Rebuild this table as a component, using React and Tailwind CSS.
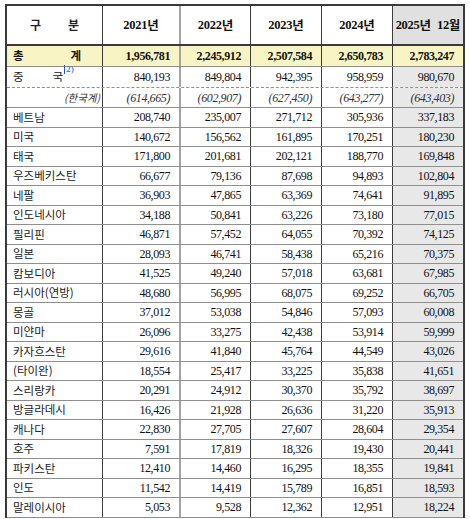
import React from 'react';

// 국적별 체류외국인 현황 (연도별)
const rows = [
  ['베트남', '208,740', '235,007', '271,712', '305,936', '337,183'],
  ['미국', '140,672', '156,562', '161,895', '170,251', '180,230'],
  ['태국', '171,800', '201,681', '202,121', '188,770', '169,848'],
  ['우즈베키스탄', '66,677', '79,136', '87,698', '94,893', '102,804'],
  ['네팔', '36,903', '47,865', '63,369', '74,641', '91,895'],
  ['인도네시아', '34,188', '50,841', '63,226', '73,180', '77,015'],
  ['필리핀', '46,871', '57,452', '64,055', '70,392', '74,125'],
  ['일본', '28,093', '46,741', '58,438', '65,216', '70,375'],
  ['캄보디아', '41,525', '49,240', '57,018', '63,681', '67,985'],
  ['러시아(연방)', '48,680', '56,995', '68,075', '69,252', '66,705'],
  ['몽골', '37,012', '53,038', '54,846', '57,093', '60,008'],
  ['미얀마', '26,096', '33,275', '42,438', '53,914', '59,999'],
  ['카자흐스탄', '29,616', '41,840', '45,764', '44,549', '43,026'],
  ['(타이완)', '18,554', '25,417', '33,225', '35,838', '41,651'],
  ['스리랑카', '20,291', '24,912', '30,370', '35,792', '38,697'],
  ['방글라데시', '16,426', '21,928', '26,636', '31,220', '35,913'],
  ['캐나다', '22,830', '27,705', '27,607', '28,604', '29,354'],
  ['호주', '7,591', '17,819', '18,326', '19,430', '20,441'],
  ['파키스탄', '12,410', '14,460', '16,295', '18,355', '19,841'],
  ['인도', '11,542', '14,419', '15,789', '16,851', '18,593'],
  ['말레이시아', '5,053', '9,528', '12,362', '12,951', '18,224'],
];

const grid = 'grid grid-cols-[96px_78px_70px_71px_71px_70px]';
const kr = "font-['Noto_Sans_CJK_KR','Noto_Sans',sans-serif]";
const serif = "font-['Liberation_Serif','Noto_Sans_CJK_KR',serif]";

// column borders: col1 dark, col2 light & thick, rest dark
const colBorder = [
  'border-r border-[#3c3c3c]',
  'border-r-2 border-[#a3a3a3]',
  'border-r border-[#3c3c3c]',
  'border-r border-[#3c3c3c]',
  'border-r border-[#3c3c3c]',
  '',
];

const Num = ({ v, i, className = '' }) => (
  <div
    className={`${colBorder[i]} flex items-center justify-end pr-[9px] ${serif} text-[12px] tracking-[-0.4px] text-[#111] ${
      i === 5 ? 'bg-[#e8e8e8]' : ''
    } ${className}`}
  >
    {v}
  </div>
);

export default function App() {
  return (
    <div className="bg-white min-h-[519px] pt-[4px] pl-[5px]">
      <div className="w-[460px] border-t-2 border-x-2 border-[#3a3a3a]">
        {/* Header */}
        <div className={`${grid} h-[40px] border-b-2 border-[#3a3a3a]`}>
          <div className={`${colBorder[0]} flex items-center justify-center gap-[27px] ${kr} text-[12px] font-bold text-[#222]`}>
            <span>구</span>
            <span>분</span>
          </div>
          {['2021', '2022', '2023', '2024'].map((y, i) => (
            <div
              key={y}
              className={`${colBorder[i + 1]} flex items-center justify-center font-bold text-[12.5px] text-[#111]`}
            >
              <span className={`${serif} tracking-[-0.3px]`}>{y}</span>
              <span className={kr}>년</span>
            </div>
          ))}
          <div className="flex items-center justify-center bg-[#e0e0e0] font-bold text-[12.5px] text-[#111]">
            <span className={`${serif} tracking-[-0.3px]`}>2025</span>
            <span className={`${kr} mr-[6px]`}>년</span>
            <span className={`${serif} tracking-[-0.3px]`}>12</span>
            <span className={kr}>월</span>
          </div>
        </div>

        {/* 총계 */}
        <div className={`${grid} h-[21px] border-b border-[#8f8f8f] bg-[#f8f4c3]`}>
          <div className={`${colBorder[0]} flex items-center justify-between pl-[6px] pr-[21px] ${kr} text-[11.5px] font-bold text-[#111]`}>
            <span>총</span>
            <span>계</span>
          </div>
          {['1,956,781', '2,245,912', '2,507,584', '2,650,783', '2,783,247'].map((v, i) => (
            <div
              key={v}
              className={`${colBorder[i + 1]} flex items-center justify-end pr-[9px] ${serif} text-[12px] font-bold tracking-[-0.4px] text-[#111]`}
            >
              {v}
            </div>
          ))}
        </div>

        {/* 중국 */}
        <div className={`${grid} h-[21px] border-b border-dashed border-[#8f8f8f]`}>
          <div className={`${colBorder[0]} flex items-center pl-[6px] ${kr} text-[11.5px] text-[#222]`}>
            <span>중</span>
            <span className="ml-[29px]">국</span>
            <sup className={`${serif} text-[9px] text-[#2255cc] -mt-[6px] ml-[1px] border-l border-[#2255cc] pl-[1px] leading-none`}>2)</sup>
          </div>
          {['840,193', '849,804', '942,395', '958,959', '980,670'].map((v, i) => (
            <Num key={v} v={v} i={i + 1} />
          ))}
        </div>

        {/* 한국계 */}
        <div className={`${grid} h-[20px] border-b border-[#8f8f8f]`}>
          <div className={`${colBorder[0]} flex items-center justify-end pr-[2px] ${kr} text-[10.5px] italic text-[#333]`}>
            (한국계)
          </div>
          {['(614,665)', '(602,907)', '(627,450)', '(643,277)', '(643,403)'].map((v, i) => (
            <Num key={v} v={v} i={i + 1} className="italic text-[11.5px] text-[#333]" />
          ))}
        </div>

        {/* 국가별 */}
        {rows.map(([name, ...vals]) => (
          <div key={name} className={`${grid} h-[19.5px] border-b border-[#8f8f8f]`}>
            <div className={`${colBorder[0]} flex items-center pl-[6px] ${kr} text-[11.5px] text-[#222]`}>
              {name}
            </div>
            {vals.map((v, i) => (
              <Num key={i} v={v} i={i + 1} />
            ))}
          </div>
        ))}
      </div>
    </div>
  );
}
